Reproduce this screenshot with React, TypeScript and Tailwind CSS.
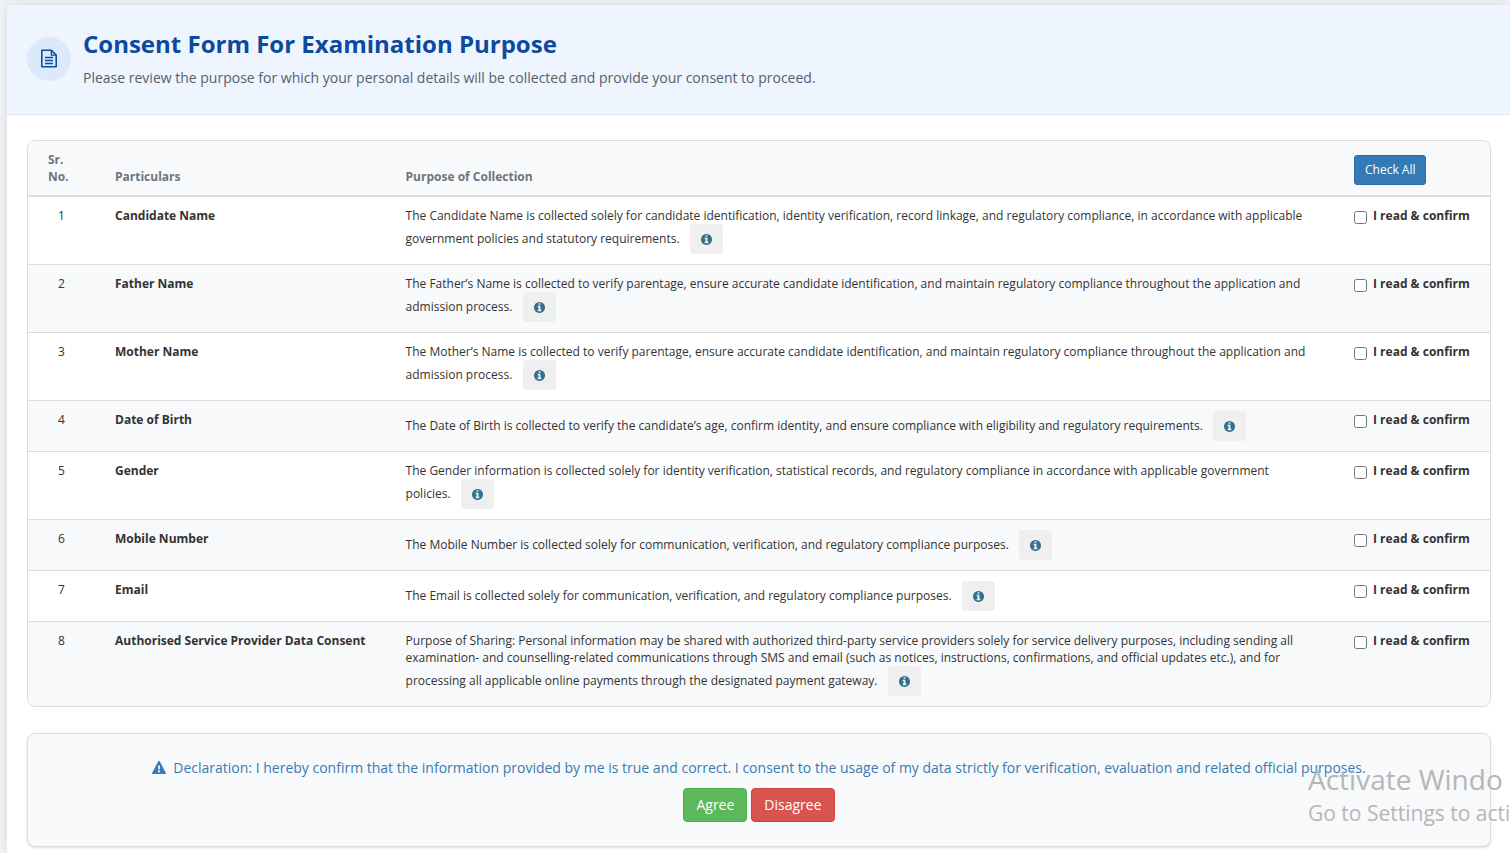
import { useState } from 'react';

const particulars = [
  {
    id: 1,
    name: 'Candidate Name',
    purpose:
      'The Candidate Name is collected solely for candidate identification, identity verification, record linkage, and regulatory compliance, in accordance with applicable government policies and statutory requirements.',
  },
  {
    id: 2,
    name: 'Father Name',
    purpose:
      'The Father’s Name is collected to verify parentage, ensure accurate candidate identification, and maintain regulatory compliance throughout the application and admission process.',
  },
  {
    id: 3,
    name: 'Mother Name',
    purpose:
      'The Mother’s Name is collected to verify parentage, ensure accurate candidate identification, and maintain regulatory compliance throughout the application and admission process.',
  },
  {
    id: 4,
    name: 'Date of Birth',
    purpose:
      'The Date of Birth is collected to verify the candidate’s age, confirm identity, and ensure compliance with eligibility and regulatory requirements.',
  },
  {
    id: 5,
    name: 'Gender',
    purpose:
      'The Gender information is collected solely for identity verification, statistical records, and regulatory compliance in accordance with applicable government policies.',
  },
  {
    id: 6,
    name: 'Mobile Number',
    purpose: 'The Mobile Number is collected solely for communication, verification, and regulatory compliance purposes.',
  },
  {
    id: 7,
    name: 'Email',
    purpose: 'The Email is collected solely for communication, verification, and regulatory compliance purposes.',
  },
  {
    id: 8,
    name: 'Authorised Service Provider Data Consent',
    purpose:
      'Purpose of Sharing: Personal information may be shared with authorized third-party service providers solely for service delivery purposes, including sending all examination- and counselling-related communications through SMS and email (such as notices, instructions, confirmations, and official updates etc.), and for processing all applicable online payments through the designated payment gateway.',
  },
];

function DocumentIcon() {
  return (
    <svg viewBox="0 0 16 19" className="w-4 h-[19px]" fill="none" stroke="currentColor" strokeWidth="1.6" aria-hidden="true">
      <path d="M.8 1.2h9.500l4.900 4.900v11.700H.8z" strokeLinejoin="round" />
      <path d="M10.300 1.200v4.900h4.900" strokeLinejoin="round" strokeWidth="1.300" />
      <path d="M4 8.500h8M4 11.500h8M4 14.500h8" strokeWidth="1.300" />
    </svg>
  );
}

function InfoIcon() {
  return (
    <svg viewBox="0 128 1536 1536" className="inline w-[11px] h-[11px] align-[-2px]" fill="currentColor" aria-hidden="true">
      <path d="M1024 1376v-160q0-14-9-23t-23-9h-96v-512q0-14-9-23t-23-9h-320q-14 0-23 9t-9 23v160q0 14 9 23t23 9h96v320h-96q-14 0-23 9t-9 23v160q0 14 9 23t23 9h448q14 0 23-9t9-23zm-128-896v-160q0-14-9-23t-23-9h-192q-14 0-23 9t-9 23v160q0 14 9 23t23 9h192q14 0 23-9t9-23zm640 416q0 209-103 385.5t-279.5 279.5-385.5 103-385.5-103-279.5-279.5-103-385.5 103-385.5 279.5-279.5 385.5-103 385.5 103 279.5 279.5 103 385.5z" />
    </svg>
  );
}

function WarningIcon() {
  return (
    <svg viewBox="0 0 14 13" className="inline w-[14px] h-[13px] mr-[7px] align-[-1px]" fill="currentColor" aria-hidden="true">
      <path
        fillRule="evenodd"
        d="M7 0c.4 0 .7.2.9.6l6 11.4c.3.6 0 1-.6 1H.7c-.6 0-.9-.4-.6-1L6.1.6C6.3.2 6.6 0 7 0zM6 4.5l.3 4h1.4l.3-4zM6 9.5v1.8h2V9.5z"
      />
    </svg>
  );
}

export default function App() {
  const [checked, setChecked] = useState<number[]>([]);

  const toggle = (id: number) =>
    setChecked(prev => (prev.includes(id) ? prev.filter(x => x !== id) : [...prev, id]));

  const checkAll = () =>
    setChecked(prev => (prev.length === particulars.length ? [] : particulars.map(p => p.id)));

  return (
    <div className="relative overflow-hidden min-h-screen flex flex-col bg-[#f0f2f5] pt-[5px] pl-[7px] font-['Open_Sans',sans-serif] text-sm text-[#333]">
      <main className="grow bg-white shadow-[0_0_10px_rgba(0,0,0,0.1)]">
        {/* Title */}
        <header className="flex items-center gap-3 px-5 pt-6 pb-[26px] bg-[#eef5ff] border-b border-[#dde5ee]">
          <div className="w-11 h-11 shrink-0 rounded-full bg-[#dbe9fb] text-[#0d4d9c] flex items-center justify-center">
            <DocumentIcon />
          </div>
          <div>
            <h1 className="text-2xl leading-[30px] font-bold text-[#0b4a9e]">Consent Form For Examination Purpose</h1>
            <p className="mt-[9px] leading-5 text-[#56606a]">
              Please review the purpose for which your personal details will be collected and provide your consent to proceed.
            </p>
          </div>
        </header>

        <div className="pl-5 pr-[19px] pt-[25px] pb-1">
          {/* Particulars */}
          <div className="border border-[#d9dcdf] rounded-lg overflow-hidden">
            <table className="w-full text-xs leading-[17px]">
              <thead>
                <tr className="bg-[#f8f9fb] border-b-2 border-[#dadcde] text-left align-bottom text-[#6c757d]">
                  <th className="w-[67px] px-5 py-[10px]">Sr. No.</th>
                  <th className="w-[290px] px-5 py-[10px]">Particulars</th>
                  <th className="px-5 py-[10px]">Purpose of Collection</th>
                  <th className="w-[156px] px-5 py-[10px]">
                    <button
                      type="button"
                      onClick={checkAll}
                      className="block px-[10px] py-[5px] leading-[18px] font-normal text-white bg-[#337ab7] border border-[#2e6da4] rounded-[3px]"
                    >
                      Check All
                    </button>
                  </th>
                </tr>
              </thead>
              <tbody>
                {particulars.map(item => (
                  <tr key={item.id} className="align-top border-b border-[#dadde0] last:border-b-0 even:bg-[#f8f9fb]">
                    <td className="px-5 py-[10px] text-center">{item.id}</td>
                    <td className="px-5 py-[10px] font-bold whitespace-nowrap">{item.name}</td>
                    <td className="px-5 py-[10px]">
                      {item.purpose}{' '}
                      <button
                        type="button"
                        aria-label={`About ${item.name}`}
                        className="ml-[7px] px-[10px] py-[5px] leading-[18px] text-[#31708f] bg-[#efefef] border border-[#efefef] rounded-[3px]"
                      >
                        <InfoIcon />
                      </button>
                    </td>
                    <td className="px-5 py-[10px] whitespace-nowrap">
                      <label className="flex items-start gap-[6px] font-bold">
                        <input
                          type="checkbox"
                          checked={checked.includes(item.id)}
                          onChange={() => toggle(item.id)}
                          className="mt-1 w-[13px] h-[13px]"
                        />
                        I read &amp; confirm
                      </label>
                    </td>
                  </tr>
                ))}
              </tbody>
            </table>
          </div>

          {/* Declaration */}
          <section className="mt-[26px] p-6 text-center bg-[#f8f9fb] border border-[#dadde0] rounded-lg shadow-sm">
            <p className="leading-5 text-[#397bb0]">
              <WarningIcon />
              Declaration: I hereby confirm that the information provided by me is true and correct. I consent to the usage of my
              data strictly for verification, evaluation and related official purposes.
            </p>
            <div className="mt-[10px] flex justify-center gap-1 leading-5 text-white">
              <button type="button" className="px-3 py-[6px] bg-[#5cb85c] border border-[#4cae4c] rounded">
                Agree
              </button>
              <button type="button" className="px-3 py-[6px] bg-[#d9534f] border border-[#d43f3a] rounded">
                Disagree
              </button>
            </div>
          </section>
        </div>
      </main>

      {/* System notice over the lower right corner */}
      <div className="absolute right-0 bottom-6 w-[202px] whitespace-nowrap pointer-events-none text-[#b5b6b8]">
        <p className="text-[28px] leading-9">Activate Windo</p>
        <p className="text-[21px] leading-8">Go to Settings to acti</p>
      </div>
    </div>
  );
}
